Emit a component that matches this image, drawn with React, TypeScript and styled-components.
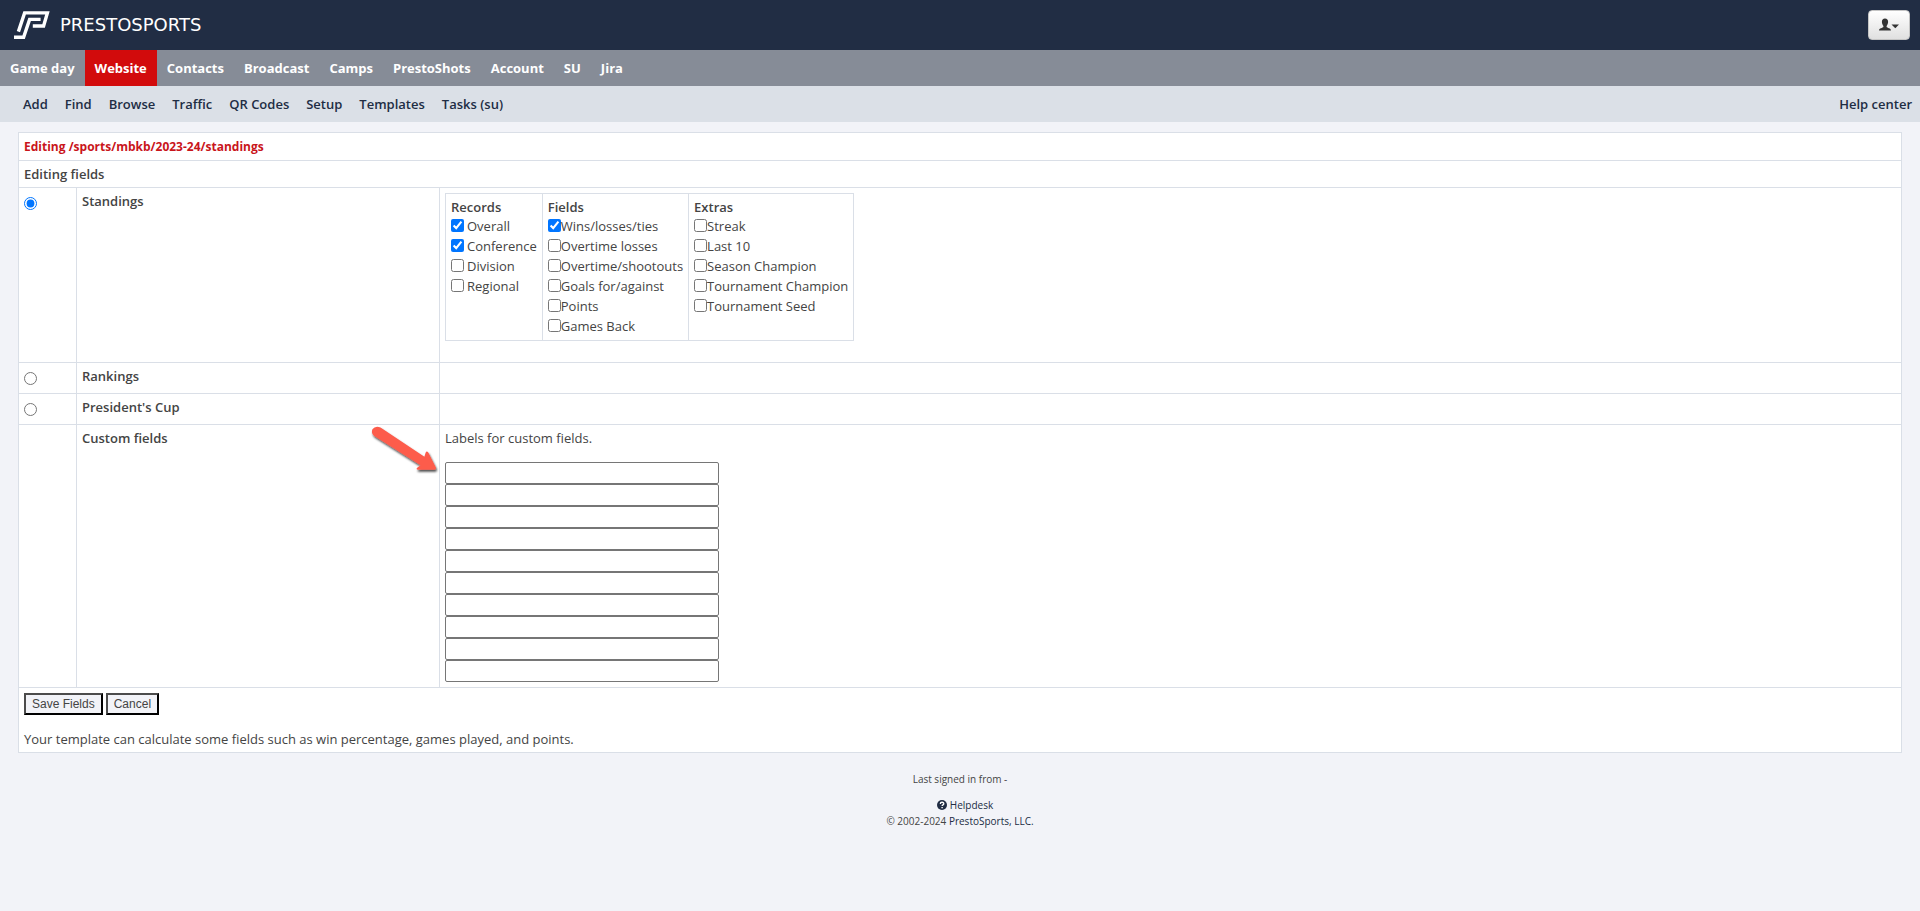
import React from "react";
import styled, { createGlobalStyle } from "styled-components";

const color = {
  navy: "#212d44",
  grey: "#868c97",
  pale: "#dbe0e7",
  page: "#f2f3f8",
  red: "#d20b0c",
  title: "#c9151b",
  text: "#444444",
  line: "#dadfe7",
};

const GlobalStyle = createGlobalStyle`
  *, *::before, *::after { box-sizing: border-box; }
  body {
    margin: 0;
    background: ${color.page};
    color: ${color.text};
    font-family: "Open Sans", "Liberation Sans", sans-serif;
    font-size: 13px;
    line-height: 18px;
  }
`;

const TopBar = styled.header`
  display: flex;
  align-items: center;
  justify-content: space-between;
  height: 50px;
  padding: 0 10px 0 14px;
  background: ${color.navy};
`;

const Brand = styled.a`
  display: flex;
  align-items: center;
  gap: 10px;
  color: #fff;
  text-decoration: none;
  font: 18px/20px "DejaVu Sans", sans-serif;
`;

const UserButton = styled.button`
  display: flex;
  align-items: center;
  justify-content: center;
  width: 42px;
  height: 30px;
  padding: 0;
  border: 1px solid #c5c5c5;
  border-radius: 4px;
  background: linear-gradient(#ffffff, #e0e0e0);
`;

const MainNav = styled.nav`
  display: flex;
  background: ${color.grey};
`;

const MainLink = styled.a<{ $active?: boolean }>`
  padding: 0 10px;
  line-height: 36px;
  font-weight: 700;
  color: #fff;
  text-decoration: none;
  background: ${(p) => (p.$active ? color.red : "transparent")};
`;

const SubNav = styled.nav`
  display: flex;
  gap: 1px;
  padding-left: 15px;
  background: ${color.pale};
`;

const SubLink = styled.a<{ $end?: boolean }>`
  padding: 0 8px;
  margin-left: ${(p) => (p.$end ? "auto" : "0")};
  line-height: 36px;
  font-weight: 600;
  color: ${color.navy};
  text-decoration: none;
`;

const Content = styled.main`
  padding: 10px 18px 0;
`;

const FormTable = styled.table`
  width: 100%;
  table-layout: fixed;
  border-collapse: collapse;
  background: #fff;
`;

const RadioCol = styled.col`
  width: 58px;
`;

const NameCol = styled.col`
  width: 363px;
`;

const Cell = styled.td`
  position: relative;
  padding: 4px 5px;
  border: 1px solid ${color.line};
  text-align: left;
  vertical-align: top;
`;

const Title = styled.h1`
  margin: 0;
  font-size: 12px;
  line-height: 19px;
  font-weight: 700;
  color: ${color.title};
`;

const Heading = styled.div`
  font-weight: 600;
`;

const NameLabel = styled.label`
  font-weight: 600;
`;

const Radio = styled.input`
  display: block;
  width: 13px;
  height: 13px;
  margin: 5px 0 4px;
`;

const OptionTable = styled.table`
  margin: 1px 0 17px;
  border-collapse: collapse;
`;

const Option = styled.label<{ $spaced?: boolean }>`
  display: flex;
  align-items: flex-start;
  gap: ${(p) => (p.$spaced ? "3px" : "0")};
  line-height: 20px;
  white-space: nowrap;
`;

const Check = styled.input`
  width: 13px;
  height: 13px;
  margin: 3px 0 0;
`;

const Paragraph = styled.p`
  margin: 0;
`;

const FieldList = styled.div`
  display: flex;
  flex-direction: column;
  align-items: flex-start;
  margin: 15px 0 1px;
`;

const TextField = styled.input`
  width: 274px;
  height: 22px;
  padding: 1px 2px;
  border: 1px solid #767676;
  border-radius: 2px;
  background: #fff;
  font: 13px "Liberation Sans", sans-serif;
`;

const Pointer = styled.svg`
  position: absolute;
  top: 0;
  right: 0;
`;

const Actions = styled.div`
  display: flex;
  gap: 3px;
  margin: 1px 0 15px;
`;

const ActionButton = styled.button`
  height: 22px;
  padding: 0 6px;
  border: 2px solid;
  border-color: #4c4c4c #000 #000 #4c4c4c;
  background: ${color.page};
  color: ${color.text};
  font: 12px/18px "Liberation Sans", sans-serif;
`;

const Footer = styled.footer`
  padding: 18px 0;
  text-align: center;
  font-size: 10px;
  line-height: 16px;
`;

const SignedIn = styled.p`
  margin: 0 0 10px;
`;

const HelpLink = styled.a`
  display: flex;
  align-items: center;
  justify-content: center;
  gap: 3px;
  padding-left: 10px;
  color: ${color.navy};
  text-decoration: none;
`;

const CompanyLink = styled.a`
  color: ${color.navy};
  text-decoration: none;
`;

const mainLinks = ["Game day", "Website", "Contacts", "Broadcast", "Camps", "PrestoShots", "Account", "SU", "Jira"];
const subLinks = ["Add", "Find", "Browse", "Traffic", "QR Codes", "Setup", "Templates", "Tasks (su)"];

const optionGroups = [
  { title: "Records", spaced: true, options: ["Overall", "Conference", "Division", "Regional"], checked: ["Overall", "Conference"] },
  {
    title: "Fields",
    spaced: false,
    options: ["Wins/losses/ties", "Overtime losses", "Overtime/shootouts", "Goals for/against", "Points", "Games Back"],
    checked: ["Wins/losses/ties"],
  },
  {
    title: "Extras",
    spaced: false,
    options: ["Streak", "Last 10", "Season Champion", "Tournament Champion", "Tournament Seed"],
    checked: [] as string[],
  },
];

const customFields = Array.from({ length: 10 }, (_, i) => i + 1);

function LogoMark() {
  return (
    <svg width="36" height="28" viewBox="0 0 36 28" fill="none" stroke="#fff" strokeWidth="3.4" aria-hidden="true">
      <path d="M4.400 20.600 L10.600 1.900 H33.400 L29.600 15 H18.800" />
      <path d="M0 26.200 H9.600 L15.600 8.400 H26.600" />
    </svg>
  );
}

function UserIcon() {
  return (
    <svg width="20" height="14" viewBox="0 0 20 14" fill="#333" aria-hidden="true">
      <path d="M6 .5c2 0 3.200 1.400 3.100 3.500-.1 1.800-.8 3-1.500 3.900v1.100c.5.9 4.400 1.200 4.400 3.500H0c0-2.300 3.900-2.600 4.400-3.500V7.900C3.700 7 3 5.800 2.900 4 2.800 1.900 4 .5 6 .5z" />
      <path d="M12.500 6.500h7.500l-3.700 3.700z" />
    </svg>
  );
}

function HelpIcon() {
  return (
    <svg width="10" height="10" viewBox="0 0 10 10" aria-hidden="true">
      <circle cx="5" cy="5" r="5" fill={color.navy} />
      <path d="M3.300 3.900c0-2.200 3.500-2.100 3.500-.2C6.800 4.900 5.100 4.800 5.100 6" fill="none" stroke="#fff" strokeWidth="1.300" />
      <path d="M4.400 7h1.400v1.300H4.400z" fill="#fff" />
    </svg>
  );
}

function ArrowPointer() {
  return (
    <Pointer width="71" height="54" viewBox="0 0 71 54" aria-hidden="true">
      <defs>
        <filter id="arrow-shadow" x="-20%" y="-20%" width="150%" height="150%">
          <feDropShadow dx="1" dy="2" stdDeviation="1.200" floodColor="#000" floodOpacity="0.7" />
        </filter>
      </defs>
      <path
        d="M12.500 2.400 L56.400 31.800 L57.600 27.800 Q58.700 25.500 60.300 27.600 L67.900 42.600 Q68.600 44.600 66.500 44.700 L50 44.700 Q47.600 44.200 49.200 42.700 L52.500 40.300 L6.300 10.900 Q2.800 8.300 4.400 4.300 Q7.300 .2 12.500 2.400 Z"
        fill="#fd5b4c"
        filter="url(#arrow-shadow)"
      />
    </Pointer>
  );
}

export default function App() {
  return (
    <>
      <GlobalStyle />
      <TopBar>
        <Brand href="#">
          <LogoMark />
          PRESTOSPORTS
        </Brand>
        <UserButton type="button" aria-label="User menu">
          <UserIcon />
        </UserButton>
      </TopBar>
      <MainNav>
        {mainLinks.map((name) => (
          <MainLink key={name} href="#" $active={name === "Website"}>
            {name}
          </MainLink>
        ))}
      </MainNav>
      <SubNav>
        {subLinks.map((name) => (
          <SubLink key={name} href="#">
            {name}
          </SubLink>
        ))}
        <SubLink href="#" $end>
          Help center
        </SubLink>
      </SubNav>
      <Content>
        <FormTable>
          <colgroup>
            <RadioCol />
            <NameCol />
            <col />
          </colgroup>
          <tbody>
            <tr>
              <Cell colSpan={3}>
                <Title>Editing /sports/mbkb/2023-24/standings</Title>
              </Cell>
            </tr>
            <tr>
              <Cell colSpan={3}>
                <Heading>Editing fields</Heading>
              </Cell>
            </tr>
            <tr>
              <Cell>
                <Radio type="radio" name="kind" id="kind-standings" defaultChecked />
              </Cell>
              <Cell>
                <NameLabel htmlFor="kind-standings">Standings</NameLabel>
              </Cell>
              <Cell>
                <OptionTable>
                  <tbody>
                    <tr>
                      {optionGroups.map((group) => (
                        <Cell key={group.title}>
                          <Heading>{group.title}</Heading>
                          {group.options.map((option) => (
                            <Option key={option} $spaced={group.spaced}>
                              <Check type="checkbox" defaultChecked={group.checked.includes(option)} />
                              {option}
                            </Option>
                          ))}
                        </Cell>
                      ))}
                    </tr>
                  </tbody>
                </OptionTable>
              </Cell>
            </tr>
            <tr>
              <Cell>
                <Radio type="radio" name="kind" id="kind-rankings" />
              </Cell>
              <Cell>
                <NameLabel htmlFor="kind-rankings">Rankings</NameLabel>
              </Cell>
              <Cell />
            </tr>
            <tr>
              <Cell>
                <Radio type="radio" name="kind" id="kind-cup" />
              </Cell>
              <Cell>
                <NameLabel htmlFor="kind-cup">President's Cup</NameLabel>
              </Cell>
              <Cell />
            </tr>
            <tr>
              <Cell />
              <Cell>
                <Heading>Custom fields</Heading>
                <ArrowPointer />
              </Cell>
              <Cell>
                <Paragraph>Labels for custom fields.</Paragraph>
                <FieldList>
                  {customFields.map((n) => (
                    <TextField key={n} type="text" aria-label={`Custom field ${n}`} />
                  ))}
                </FieldList>
              </Cell>
            </tr>
            <tr>
              <Cell colSpan={3}>
                <Actions>
                  <ActionButton type="button">Save Fields</ActionButton>
                  <ActionButton type="button">Cancel</ActionButton>
                </Actions>
                <Paragraph>
                  Your template can calculate some fields such as win percentage, games played, and points.
                </Paragraph>
              </Cell>
            </tr>
          </tbody>
        </FormTable>
      </Content>
      <Footer>
        <SignedIn>Last signed in from -</SignedIn>
        <HelpLink href="#">
          <HelpIcon />
          Helpdesk
        </HelpLink>
        © 2002-2024 <CompanyLink href="#">PrestoSports, LLC.</CompanyLink>
      </Footer>
    </>
  );
}
